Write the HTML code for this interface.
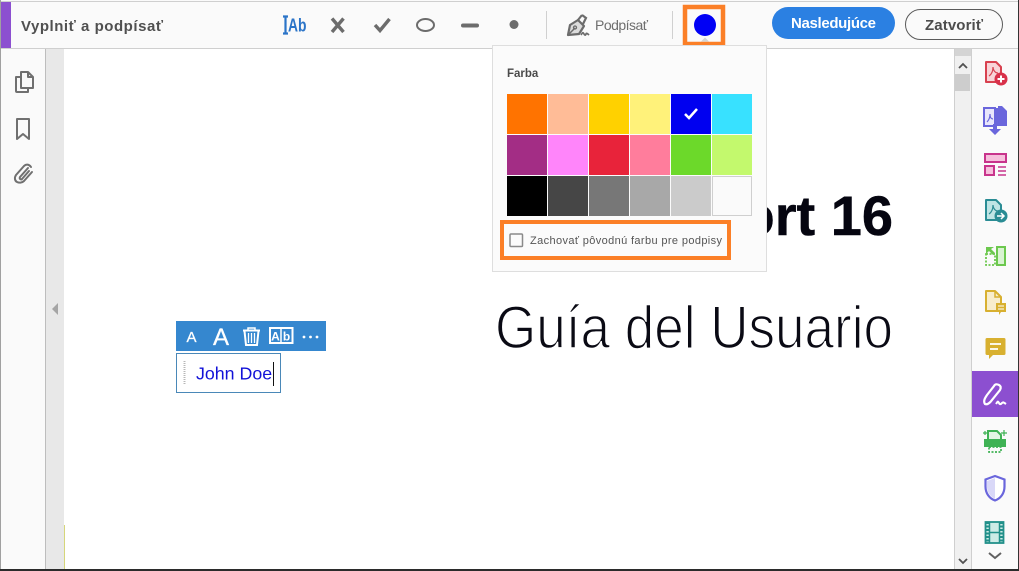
<!DOCTYPE html>
<html><head><meta charset="utf-8"><style>
html,body{margin:0;padding:0;background:#fff;overflow:hidden}
svg{display:block;position:absolute;left:0;top:0}
text{font-family:"Liberation Sans",sans-serif}
</style></head><body>
<svg width="1019" height="571" viewBox="0 0 1019 571" xmlns="http://www.w3.org/2000/svg">
<rect width="1019" height="571" fill="#fff"/>
<!-- document text -->
<text x="893" y="235" text-anchor="end" font-size="56" font-weight="700" fill="#050510" stroke="#050510" stroke-width="0.5">Report 16</text>
<text x="495" y="348" font-size="60" fill="#0a0a14" stroke="#fff" stroke-width="1.500" textLength="398" lengthAdjust="spacingAndGlyphs">Guía del Usuario</text>
<!-- left panels -->
<rect x="0" y="49" width="45" height="522" fill="#fafafa"/>
<rect x="45" y="49" width="1" height="522" fill="#bdbdbd"/>
<rect x="46" y="49" width="18" height="522" fill="#e8e8e8"/>
<rect x="64" y="525" width="1" height="45" fill="#d6d67a"/>
<path d="M58 303v12l-6-6z" fill="#a5a5a5"/>
<rect x="0" y="0" width="1" height="571" fill="#a0a0a0"/>
<!-- toolbar -->
<rect x="0" y="0" width="1019" height="49" fill="#fafafa"/>
<rect x="0" y="1" width="1019" height="1" fill="#cfcfcf"/>
<rect x="0" y="48" width="1019" height="1" fill="#cfcfcf"/>
<rect x="0" y="0" width="1" height="49" fill="#a0a0a0"/>
<rect x="1" y="2" width="10" height="46" fill="#8c4fd0"/>
<text x="21" y="31" font-size="15" font-weight="700" fill="#505050" textLength="142" lengthAdjust="spacing">Vyplniť a podpísať</text>
<!-- left icons -->
<g fill="none" stroke="#707070" stroke-width="2" stroke-linejoin="round">
<path d="M21 72h7l5 5v11H21z"/><path d="M28 72v5h5"/><path d="M21 77h-5v14a1 1 0 0 0 1 1h11v-4"/>
<path d="M17 119h12v20l-6-5-6 5z"/>
<path d="M31 167c-2-3-5-3-7-1l-8 9c-2 3-1 6 1 7s5 1 7-1l8-9M28 168l-8 9c-1 2 1 3 2 2l7-8" stroke-linecap="round"/>
</g>
<!-- tools -->
<path d="M283 16.500h5M285.500 16.500v17M283 33.500h5" stroke="#2b74c8" stroke-width="2.200" fill="none"/>
<text x="288" y="31.500" font-size="18.500" font-weight="700" fill="#2b74c8" textLength="18.500" lengthAdjust="spacingAndGlyphs">Ab</text>
<path d="M332 18.500l11.500 13.500M343.500 18.500l-11.500 13.500" stroke="#6c6c6c" stroke-width="3.400" fill="none"/>
<path d="M375 25l5 5.500 9.500-11.500" stroke="#6c6c6c" stroke-width="3.400" fill="none"/>
<ellipse cx="425.500" cy="25" rx="8.500" ry="6" fill="none" stroke="#6c6c6c" stroke-width="2"/>
<rect x="461" y="23.500" width="18" height="4" rx="2" fill="#6c6c6c"/>
<circle cx="514" cy="24.500" r="4.500" fill="#6c6c6c"/>
<rect x="546" y="11" width="1" height="28" fill="#d0d0d0"/>
<g fill="none" stroke="#6c6c6c">
<path d="M568 35l2-10 8-5 6 6-5 8z" fill="#dcdcdc" stroke-width="2.200" stroke-linejoin="round"/>
<path d="M569 34l6-6" stroke-width="1.500"/>
<circle cx="575" cy="27.500" r="1.500" stroke-width="1.300"/>
<path d="M578 20l4-5M582 15l4 3-3 6" stroke-width="2.200"/>
<path d="M581 35c2-3 2-3 3-1s2 1 2-0 1-1 3 1" stroke-width="1.700"/>
</g>
<text x="595" y="30" font-size="14" fill="#6e6e6e" textLength="53" lengthAdjust="spacing">Podpísať</text>
<rect x="672" y="11" width="1" height="28" fill="#d0d0d0"/>
<!-- colour button -->
<rect x="685" y="7" width="38" height="37" fill="none" stroke="#fb7f27" stroke-width="4.500"/>
<circle cx="705" cy="25" r="11" fill="#0000f5"/>
<path d="M701 41.500l4-4 4 4z" fill="#d4d4d4"/>
<!-- action buttons -->
<rect x="772" y="7" width="123" height="32" rx="16" fill="#2b80e2"/>
<text x="833.500" y="28" text-anchor="middle" font-size="15" font-weight="700" fill="#fff" textLength="85" lengthAdjust="spacing">Nasledujúce</text>
<rect x="905.500" y="9.500" width="97" height="30" rx="15" fill="#fafafa" stroke="#5a5a5a"/>
<text x="954" y="30" text-anchor="middle" font-size="15" font-weight="700" fill="#4d4d4d" textLength="58" lengthAdjust="spacing">Zatvoriť</text>
<!-- scrollbar -->
<rect x="954" y="49" width="18" height="521" fill="#f0f0f0"/>
<rect x="954" y="49" width="1" height="521" fill="#cfcfcf"/>
<rect x="971" y="49" width="1" height="521" fill="#cfcfcf"/>
<rect x="955" y="49" width="16" height="7" fill="#d4d4d4"/>
<rect x="955" y="74" width="15" height="17" fill="#cdcdcd"/>
<path d="M959 68l4-4 4 4" fill="none" stroke="#505050" stroke-width="1.800"/>
<path d="M959 559l4 4 4-4" fill="none" stroke="#505050" stroke-width="1.800"/>
<!-- right panel -->
<rect x="972" y="49" width="46" height="521" fill="#fafafa"/>
<rect x="1018" y="0" width="1" height="571" fill="#333"/>
<!-- create PDF -->
<path d="M986 62h10l5 5v15h-15z" fill="#f8d4d8" stroke="#d8414f" stroke-width="2" stroke-linejoin="round"/>
<path d="M989 76c3-2 4-6 4-9 0 3 2 6 5 6" fill="none" stroke="#d8414f" stroke-width="1.200"/>
<circle cx="1001" cy="79" r="6.500" fill="#d8314a"/><path d="M997.500 79h7M1001 75.500v7" stroke="#fff" stroke-width="2"/>
<!-- combine -->
<path d="M984 108h11v18h-11z" fill="#e8e6fb" stroke="#6a66dc" stroke-width="2"/>
<path d="M998 106h4l5 5v15h-9z" fill="#6a66dc"/><rect x="995" y="108" width="4" height="18" fill="#6a66dc"/>
<path d="M987 122c2-2 3-5 3-8 0 3 1 5 3 5" fill="none" stroke="#6a66dc" stroke-width="1.200"/>
<path d="M993 124v5h-4l6 6 6-6h-4v-5z" fill="#6a66dc"/>
<!-- organize -->
<rect x="985" y="154" width="21" height="8" fill="#f6c0dc" stroke="#c8348c" stroke-width="2"/>
<rect x="985" y="166" width="9" height="9" fill="#f6c0dc" stroke="#c8348c" stroke-width="2"/>
<path d="M998 167h8M998 171h8M998 175h8" stroke="#c8348c" stroke-width="1.400"/>
<!-- export -->
<path d="M986 200h10l5 5v15h-15z" fill="#bfe4e4" stroke="#2a8c94" stroke-width="2" stroke-linejoin="round"/>
<path d="M989 214c3-2 4-6 4-9 0 3 2 6 5 6" fill="none" stroke="#2a8c94" stroke-width="1.200"/>
<circle cx="1001" cy="216" r="6.500" fill="#2a8c94"/><path d="M997 216h7M1001 213l3 3-3 3" stroke="#fff" stroke-width="1.500" fill="none"/>
<!-- compress -->
<rect x="997" y="247" width="8" height="18" fill="#d9f3d2" stroke="#6cc84e" stroke-width="2"/>
<rect x="986" y="254" width="9" height="11" fill="none" stroke="#6cc84e" stroke-width="1.800" stroke-dasharray="2 1.500"/>
<path d="M986 247l8 0-3 2 4 4-2 2-4-4-3 3z" fill="#6cc84e"/>
<!-- note PDF -->
<path d="M986 291h9l6 6v14h-15z" fill="#f8edcc" stroke="#d8b030" stroke-width="2" stroke-linejoin="round"/>
<path d="M995 291v6h6" fill="none" stroke="#d8b030" stroke-width="1.500"/>
<path d="M996 303h10v9h-5l-2 3v-3h-3z" fill="#d8b030"/><path d="M998 306h6M998 309h6" stroke="#fff"/>
<!-- comment -->
<path d="M987 338h17a1.500 1.500 0 0 1 1.500 1.500v14a1.500 1.500 0 0 1-1.500 1.500h-11l-4 4v-4h-2a1.500 1.500 0 0 1-1.500-1.500v-14a1.500 1.500 0 0 1 1.500-1.500z" fill="#d8b030"/>
<path d="M990 344h11M990 349h8" stroke="#fff" stroke-width="1.700"/>
<!-- active sign -->
<rect x="972" y="371" width="46" height="46" fill="#8c4fd0"/>
<path d="M985 404c-2-3 0-6 2-9l7-9c1-2 3-2 5-1s2 3 1 5l-8 10c-2 3-5 5-7 4z" fill="none" stroke="#fff" stroke-width="2.200"/>
<path d="M996 404c2-3 2-3 3-1s2 1 3 0 1-1 4 1" fill="none" stroke="#fff" stroke-width="2"/>
<!-- print -->
<path d="M988 431h9l4 4v7h-13z" fill="#e3f5e3" stroke="#3fb254" stroke-width="2"/>
<rect x="984" y="439" width="22" height="8" fill="#3fb254"/>
<rect x="989" y="447" width="12" height="5" fill="none" stroke="#3fb254" stroke-width="1.700" stroke-dasharray="2 1.500"/>
<path d="M1004 430v6M1001 433h6M985 431v4M983 433h4" stroke="#3fb254" stroke-width="1.200"/>
<!-- shield -->
<path d="M995 476l9.500 3.500v7c0 7-4 12-9.500 14-5.500-2-9.500-7-9.500-14v-7z" fill="#fff" stroke="#6a66dc" stroke-width="2.200"/>
<path d="M995 478l-8 3v6c0 6 4 10 8 12z" fill="#d9d8f8"/>
<!-- film -->
<rect x="985.500" y="522" width="18" height="21" fill="#cdebe6" stroke="#22908a" stroke-width="1.800"/>
<path d="M989.500 522v21M999.500 522v21M989.500 532.500h10" stroke="#22908a" stroke-width="1.500"/>
<path d="M987.500 522v21M1001.500 522v21" stroke="#22908a" stroke-width="3.500" stroke-dasharray="2 1.500"/>
<path d="M989 553l6 5 6-5" fill="none" stroke="#606060" stroke-width="2"/>
<!-- popover -->
<rect x="492.500" y="45.500" width="274" height="226" fill="#fbfbfb" stroke="#dedede"/>
<text x="507" y="77" font-size="11.500" font-weight="700" fill="#4a4a4a">Farba</text>
<g>
<rect x="507" y="94" width="40" height="40" fill="#ff7300"/><rect x="548" y="94" width="40" height="40" fill="#ffbc97"/><rect x="589" y="94" width="40" height="40" fill="#ffd100"/><rect x="630" y="94" width="40" height="40" fill="#fff27a"/><rect x="671" y="94" width="40" height="40" fill="#0000f0"/><rect x="712" y="94" width="40" height="40" fill="#38e1ff"/>
<rect x="507" y="135" width="40" height="40" fill="#a32d85"/><rect x="548" y="135" width="40" height="40" fill="#ff85fa"/><rect x="589" y="135" width="40" height="40" fill="#e8233a"/><rect x="630" y="135" width="40" height="40" fill="#ff7d9c"/><rect x="671" y="135" width="40" height="40" fill="#6cd92a"/><rect x="712" y="135" width="40" height="40" fill="#c3f96d"/>
<rect x="507" y="176" width="40" height="40" fill="#000"/><rect x="548" y="176" width="40" height="40" fill="#464646"/><rect x="589" y="176" width="40" height="40" fill="#777"/><rect x="630" y="176" width="40" height="40" fill="#a8a8a8"/><rect x="671" y="176" width="40" height="40" fill="#cbcbcb"/><rect x="712.500" y="176.500" width="39" height="39" fill="#fafafa" stroke="#cfcfcf"/>
</g>
<path d="M685 114l4 4 8-9" fill="none" stroke="#fff" stroke-width="2.500"/>
<rect x="502" y="222" width="227" height="36" fill="#fbfbfb" stroke="#fb7f27" stroke-width="4"/>
<rect x="510" y="234" width="12.500" height="12.500" rx="1" fill="#fbfbfb" stroke="#8a8a8a" stroke-width="1.500"/>
<text x="530" y="244" font-size="11" fill="#555" textLength="192" lengthAdjust="spacing">Zachovať pôvodnú farbu pre podpisy</text>
<!-- text edit toolbar -->
<rect x="176" y="321" width="150" height="30" fill="#3587cf"/>
<text x="191.500" y="342" text-anchor="middle" font-size="15" fill="#fff" stroke="#fff" stroke-width="0.300">A</text>
<text x="221" y="345" text-anchor="middle" font-size="24" fill="#fff" stroke="#fff" stroke-width="0.300">A</text>
<g fill="none" stroke="#fff">
<path d="M243 330.500h17" stroke-width="2"/><path d="M248 330v-2h7v2" stroke-width="1.500"/>
<path d="M244.500 331l1.500 14h11l1.500-14" stroke-width="2"/><path d="M248.500 333v10M251.500 333v10M254.500 333v10" stroke-width="1.300"/>
<rect x="270" y="328" width="22.500" height="15" stroke-width="2"/><path d="M281 328v15" stroke-width="1.500"/>
</g>
<text x="275.500" y="340.500" text-anchor="middle" font-size="12" font-weight="700" fill="#fff">A</text>
<text x="286.500" y="340.500" text-anchor="middle" font-size="12" font-weight="700" fill="#fff">b</text>
<circle cx="304" cy="337" r="1.400" fill="#fff"/><circle cx="310.500" cy="337" r="1.400" fill="#fff"/><circle cx="317" cy="337" r="1.400" fill="#fff"/>
<rect x="176.500" y="353.500" width="104" height="39" fill="#fff" stroke="#4a88b8"/>
<path d="M184.500 361v23" stroke="#b8b8b8" stroke-width="2" stroke-dasharray="1 1"/>
<text x="196" y="379.500" font-size="17.800" fill="#1212d8">John Doe</text>
<rect x="273" y="362" width="1" height="24" fill="#111"/>
<!-- bottom edge -->
<rect x="0" y="569" width="1019" height="2" fill="#2b2b2b"/>
</svg>
</body></html>
